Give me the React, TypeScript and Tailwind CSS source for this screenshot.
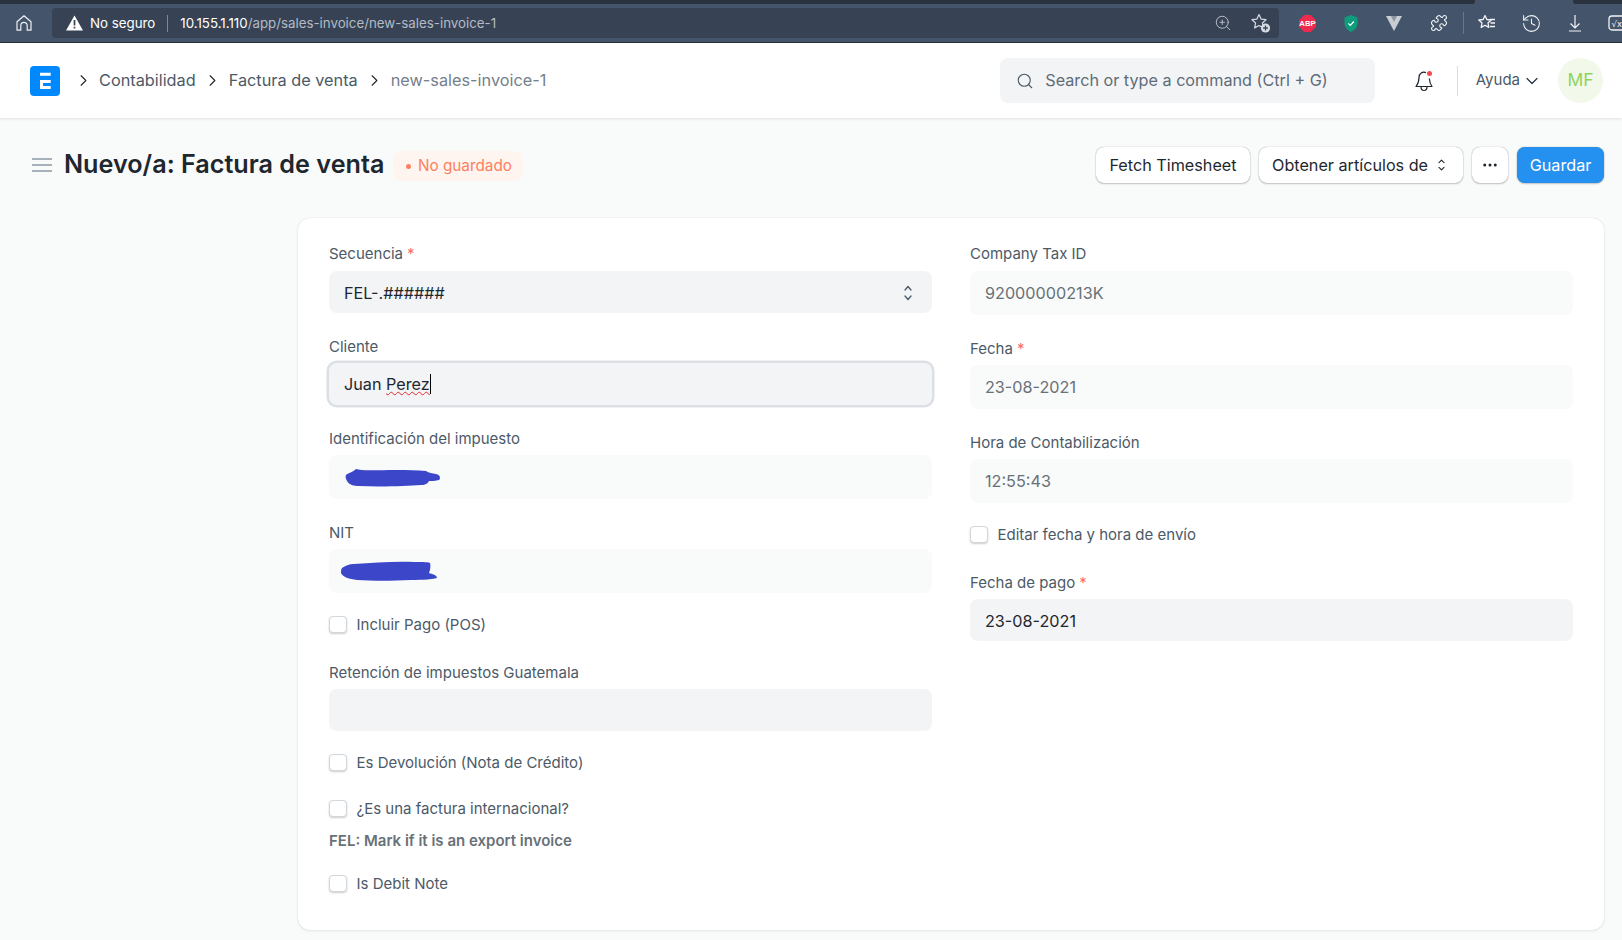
import React from "react";
import { ChevronDown, ChevronRight, History, Puzzle, Search, ZoomIn, MoreHorizontal } from "lucide-react";

const sans = "[font-family:Inter,'Noto_Sans',sans-serif]";

function Req() {
  return <span className="ml-[4px] text-[#f56b6b]">*</span>;
}

function Label({ children, req }: { children: React.ReactNode; req?: boolean }) {
  return (
    <div className="h-[18px] pt-[1px] text-[15px] leading-[18px] text-[#4c5a67]">
      {children}
      {req && <Req />}
    </div>
  );
}

function Check({ label, className }: { label: string; className: string }) {
  return (
    <div className={`flex h-[18px] items-center ${className}`}>
      <span className="h-[17px] w-[18px] rounded-[4px] border border-[#d1d8dd] bg-white shadow-[0_1px_2px_rgba(0,0,0,0.2)]" />
      <span className="ml-[9.500px] pt-[1px] text-[15px] leading-[18px] text-[#4c5a67]">{label}</span>
    </div>
  );
}

function UpDown({ w, h, color }: { w: number; h: number; color: string }) {
  return (
    <svg width={w} height={h} viewBox="0 0 8 16" preserveAspectRatio="none" fill="none" stroke={color} strokeWidth="1.300" strokeLinecap="round" strokeLinejoin="round">
      <path d="M1 5l3-3.500L7 5M1 11l3 3.500 3-3.500" />
    </svg>
  );
}

function HomeIcon() {
  return (
    <svg width="16" height="16" viewBox="0 0 16 16" fill="none" stroke="#eef1f4" strokeWidth="1.200" strokeLinejoin="round">
      <path d="M1 6.800L8 .8l7 6V15.200h-3.800V10.500a3.200 3.200 0 0 0-6.400 0V15.200H1z" />
    </svg>
  );
}

function StarPlus() {
  return (
    <svg width="22" height="22" viewBox="0 0 22 22" fill="none" stroke="#d5dbe3" strokeWidth="1.200">
      <path d="M9 2.500l2.100 4.600 4.900.6-3.600 3.300 1 4.900L9 13.500l-4.400 2.400 1-4.900L2 7.700l4.900-.6z" strokeLinejoin="round" />
      <circle cx="15.500" cy="16" r="4.600" fill="#d5dbe3" stroke="none" />
      <path d="M15.500 13.600v4.800M13.100 16h4.800" stroke="#3b4859" strokeWidth="1.300" />
    </svg>
  );
}

function StarList() {
  return (
    <svg width="20" height="20" viewBox="0 0 20 20" fill="none" stroke="#f2f4f7" strokeWidth="1.300" strokeLinejoin="round">
      <path d="M8 2.500l1.900 4 4.300.5-3.200 3 .8 4.400L8 12.300l-3.800 2.100.8-4.400-3.200-3 4.300-.5z" />
      <path d="M13 6.500h5M13.500 10h4.500M13 13.500h5" />
    </svg>
  );
}

function DownloadIcon() {
  return (
    <svg width="14" height="18" viewBox="0 0 14 18" fill="none" stroke="#f2f4f7" strokeWidth="1.200">
      <path d="M7 1v12.500M2.500 9.500L7 14l4.500-4.500M1 17h12" />
    </svg>
  );
}

function Abp() {
  return (
    <svg width="17" height="17" viewBox="0 0 18 18">
      <path d="M5.500 0h7L18 5.500v7L12.500 18h-7L0 12.500v-7z" fill="#ee2a4f" />
      <text x="9" y="11.800" textAnchor="middle" fontSize="8.200" fontWeight="700" fill="#fff" fontFamily="Liberation Sans, sans-serif">ABP</text>
    </svg>
  );
}

function Shield() {
  return (
    <svg width="14" height="17" viewBox="0 0 14 17">
      <path d="M7 0l6.500 2.500v6c0 4-3 6.800-6.500 8.500C3.500 15.300.5 12.500.5 8.500v-6z" fill="#0f9c7d" />
      <path d="M4.300 8.300l2 2 3.500-3.800" fill="none" stroke="#fff" strokeWidth="1.200" />
    </svg>
  );
}

function Vee() {
  return (
    <svg width="16" height="15" viewBox="0 0 16 15">
      <path d="M0 0h16L8 15z" fill="#c9ced5" />
      <path d="M5 0h6L8 6z" fill="#8c95a2" />
    </svg>
  );
}

function LogoE() {
  return (
    <svg width="30" height="30" viewBox="0 0 30 30" className="shrink-0">
      <rect width="30" height="30" rx="4" fill="#0089ff" />
      <path d="M10 6.800h10.700v3H10zM10 14h10.700v3H13v3h7.700v3H10z" fill="#fff" />
    </svg>
  );
}

function Hamburger() {
  return (
    <svg width="20" height="16" viewBox="0 0 20 16" fill="none" stroke="#a6b1b9" strokeWidth="2">
      <path d="M0 2h20M0 8h20M0 14h20" />
    </svg>
  );
}

function BellDot() {
  return (
    <div className="relative h-[22px] w-[18px]">
      <svg width="18" height="22" viewBox="0 0 18 22" fill="none" stroke="#1f272e" strokeWidth="1.200" strokeLinejoin="round">
        <path d="M11 2.600C7.500 1.200 4 3.400 4 7.500c0 4-1 6.500-3 9h16c-1.500-2-2.400-4.500-2.700-8" />
        <path d="M6 16.800c0 2.500 1.500 3.700 3 3.700s3-1.200 3-3.700" />
      </svg>
      <span className="absolute right-[1px] top-[1px] h-[5px] w-[5px] rounded-full bg-[#f5484d]" />
    </div>
  );
}

function Blob1() {
  return (
    <svg width="96" height="18" viewBox="0 0 96 18" fill="#3c46c8">
      <path d="M1 6C3 4 8 3 11 0c5 2 20 1 40 1 12 0 22 0 30 1 3 2 6 2 10 3 4 1 5 4 3 6-3 1-8 1-10 1-1 2-3 4-8 4-14 1-40 2-62 1-5 0-10-1-12-5C1 10 0 8 1 6z" />
    </svg>
  );
}

function Blob2() {
  return (
    <svg width="97" height="20" viewBox="0 0 97 20" fill="#3c46c8">
      <path d="M1 7c3-2 7-4 12-4 20-1 40-3 60-2 10 0 15 0 16 1 1 3 0 8-1 10 3 1 8 2 8 5-2 1-14 2-26 2-20 1-38 1-54 0-8-1-14-3-16-7C0 10 0 8 1 7z" />
    </svg>
  );
}

function Btn({ children, className = "" }: { children: React.ReactNode; className?: string }) {
  return (
    <div className={`flex h-[36px] items-center rounded-[8px] bg-white text-[16.200px] text-[#1f272e] shadow-[0_0_1px_rgba(0,0,0,0.45),0_1px_2px_rgba(0,0,0,0.2)] ${className}`}>
      {children}
    </div>
  );
}

export default function App() {
  return (
    <div className={`flex h-[940px] w-[1622px] flex-col overflow-hidden bg-[#f9fafa] ${sans}`}>
      {/* browser chrome */}
      <div className="relative h-[43px] shrink-0 border-b border-[#252d38] bg-[#44546a] pt-[8px]">
        <div className="absolute left-0 right-0 top-0 flex h-[4px] justify-between">
          <div className="w-[1475px] rounded-br-[3px] bg-[#2a323e]" />
          <div className="w-[49px] rounded-bl-[3px] bg-[#2a323e]" />
        </div>
        <div className="flex h-[30px] items-center">
          <div className="flex w-[52px] shrink-0 justify-center pr-[4px]">
            <HomeIcon />
          </div>
          <div className="flex h-[30px] w-[1227px] shrink-0 items-center rounded-[4px] bg-[#374354] pl-[14px] pr-[7px]">
            <svg width="17" height="16" viewBox="0 0 17 16">
              <path d="M8.500 0.500L17 15.500H0z" fill="#fff" />
              <path d="M8.500 5v5.500M8.500 11.800v1.600" stroke="#374354" strokeWidth="1.700" />
            </svg>
            <span className="ml-[7px] pt-[1px] text-[13.300px] text-white">No seguro</span>
            <span className="ml-[12px] h-[17px] w-px bg-[#7d8896]" />
            <span className="ml-[12px] pt-[1px] text-[13.300px] text-white">10.155.1.110</span>
            <span className="pt-[1px] text-[13.300px] text-[#b3bbc6]">/app/sales-invoice/new-sales-invoice-1</span>
            <div className="ml-auto flex items-center gap-[18px]">
              <ZoomIn className="h-[18px] w-[18px] text-[#c3cad3]" strokeWidth={1.200} />
              <StarPlus />
            </div>
          </div>
          <div className="ml-[19px] flex items-center">
            <div className="flex w-[18px] justify-center"><Abp /></div>
            <div className="ml-[28px] flex w-[14px] justify-center"><Shield /></div>
            <div className="ml-[28px] flex w-[16px] justify-center"><Vee /></div>
            <Puzzle className="ml-[28px] h-[18px] w-[18px] text-[#f2f4f7]" strokeWidth={1.500} />
            <span className="ml-[15px] h-[22px] w-px bg-[#6a7789]" />
            <div className="ml-[13px]"><StarList /></div>
            <History className="ml-[24px] h-[21px] w-[21px] text-[#f2f4f7]" strokeWidth={1.200} />
            <div className="ml-[26px]"><DownloadIcon /></div>
            <svg className="ml-[26px] shrink-0" width="20" height="20" viewBox="0 0 20 20" fill="none" stroke="#f2f4f7" strokeWidth="1.300">
              <rect x="1" y="3" width="18" height="14" rx="3" />
              <text x="3.500" y="13.500" fontSize="8.500" fill="#f2f4f7" stroke="none" fontFamily="DejaVu Sans, sans-serif">√x</text>
            </svg>
          </div>
        </div>
      </div>

      {/* app nav */}
      <div className="flex h-[75px] shrink-0 items-center bg-white pl-[30px] pr-[19px] shadow-[0_1px_3px_rgba(0,0,0,0.1)]">
        <LogoE />
        <ChevronRight className="ml-[13.500px] h-[19px] w-[19px] text-[#1f272e]" strokeWidth={1.400} />
        <span className="ml-[6.500px] text-[16.300px] text-[#4c5a67]">Contabilidad</span>
        <ChevronRight className="ml-[7px] h-[19px] w-[19px] text-[#1f272e]" strokeWidth={1.400} />
        <span className="ml-[7px] text-[16.300px] text-[#4c5a67]">Factura de venta</span>
        <ChevronRight className="ml-[7px] h-[19px] w-[19px] text-[#1f272e]" strokeWidth={1.400} />
        <span className="ml-[7px] text-[16.300px] text-[#74808b]">new-sales-invoice-1</span>
        <div className="ml-auto flex h-[45px] w-[375px] items-center rounded-[8px] bg-[#f3f4f6] pl-[16px]">
          <Search className="h-[18px] w-[18px] text-[#4c5a67]" strokeWidth={1.500} />
          <span className="ml-[11px] text-[16.200px] text-[#5e6c78]">Search or type a command (Ctrl + G)</span>
        </div>
        <div className="ml-[40px]"><BellDot /></div>
        <span className="ml-[24px] h-[30px] w-px bg-[#d8dde1]" />
        <span className="ml-[17.500px] text-[15px] text-[#4c5a67]">Ayuda</span>
        <ChevronDown className="ml-[2px] h-[20px] w-[20px] text-[#2f3942]" strokeWidth={1.500} />
        <div className="ml-[16px] flex h-[45px] w-[45px] shrink-0 items-center justify-center rounded-full bg-[#f2f9ea] text-[17.500px] text-[#8fd35f]">MF</div>
      </div>

      {/* page head */}
      <div className="flex h-[100px] shrink-0 items-center pl-[32px] pr-[18px] pb-[6px]">
        <Hamburger />
        <h1 className="ml-[12px] text-[25.200px] font-semibold text-[#1f272e]">Nuevo/a: Factura de venta</h1>
        <div className="ml-[9px] mt-[2px] flex h-[30px] w-[130px] items-center rounded-[8px] bg-[#fff5f0] pl-[13px] text-[15.300px] text-[#fd8060]">
          <span className="mr-[6.500px] h-[5px] w-[5px] rounded-full bg-[#fd8060]" />
          No guardado
        </div>
        <div className="ml-auto flex items-center gap-[9px]">
          <Btn className="w-[154px] justify-center">Fetch Timesheet</Btn>
          <Btn className="w-[204px] pl-[13px]">
            Obtener artículos de
            <span className="ml-[10px]"><UpDown w={7} h={12} color="#1f272e" /></span>
          </Btn>
          <Btn className="w-[36px] justify-center"><MoreHorizontal className="h-[18px] w-[18px]" strokeWidth={2} /></Btn>
          <Btn className="w-[87px] justify-center !bg-[#2490ef] !text-white">Guardar</Btn>
        </div>
      </div>

      {/* form card */}
      <div className="ml-[298px] grid h-[712px] w-[1306px] shrink-0 grid-cols-[603px_603px] gap-x-[38px] rounded-[12px] bg-white pl-[31px] pt-[26px] text-[16.200px] shadow-[0_0_1px_rgba(0,0,0,0.2),0_1px_3px_rgba(0,0,0,0.08)]">
        <div>
          <Label req>Secuencia</Label>
          <div className="mt-[9px] flex h-[42px] items-center justify-between rounded-[8px] bg-[#f3f4f6] pl-[15px] pr-[20px] pt-[2px] text-[#1f272e]">
            FEL-.######
            <UpDown w={8} h={16} color="#4c5a67" />
          </div>

          <div className="mt-[24px]"><Label>Cliente</Label></div>
          <div className="mt-[8px] flex h-[42px] items-center rounded-[8px] bg-[#f3f4f6] pl-[15px] text-[#1f272e] shadow-[0_0_0_2.500px_#dcdfe3]">
            Juan&nbsp;
            <span className="underline decoration-[#e02b2b] decoration-wavy decoration-[1px] underline-offset-[1px]">Perez</span>
            <span className="h-[20px] w-px bg-black" />
          </div>

          <div className="mt-[24px]"><Label>Identificación del impuesto</Label></div>
          <div className="mt-[8px] flex h-[44px] items-center rounded-[8px] bg-[#f9fafa] pl-[16px] pt-[2px]"><Blob1 /></div>

          <div className="mt-[24px]"><Label>NIT</Label></div>
          <div className="mt-[8px] flex h-[44px] items-center rounded-[8px] bg-[#f9fafa] pl-[12px]"><Blob2 /></div>

          <Check className="mt-[22px]" label="Incluir Pago (POS)" />

          <div className="mt-[30px]"><Label>Retención de impuestos Guatemala</Label></div>
          <div className="mt-[8px] h-[42px] rounded-[8px] bg-[#f3f4f6]" />

          <Check className="mt-[22px]" label="Es Devolución (Nota de Crédito)" />
          <Check className="mt-[28px]" label="¿Es una factura internacional?" />
          <div className="mt-[14px] h-[18px] pt-[1px] text-[15px] font-semibold leading-[18px] text-[#687178]">FEL: Mark if it is an export invoice</div>
          <Check className="mt-[25px]" label="Is Debit Note" />
        </div>

        <div>
          <Label>Company Tax ID</Label>
          <div className="mt-[9px] flex h-[44px] items-center rounded-[8px] bg-[#f9fafa] pl-[15px] text-[#687178]">92000000213K</div>

          <div className="mt-[24px]"><Label req>Fecha</Label></div>
          <div className="mt-[8px] flex h-[44px] items-center rounded-[8px] bg-[#f9fafa] pl-[15px] text-[#687178]">23-08-2021</div>

          <div className="mt-[24px]"><Label>Hora de Contabilización</Label></div>
          <div className="mt-[8px] flex h-[44px] items-center rounded-[8px] bg-[#f9fafa] pl-[15px] text-[#687178]">12:55:43</div>

          <Check className="mt-[22px]" label="Editar fecha y hora de envío" />

          <div className="mt-[30px]"><Label req>Fecha de pago</Label></div>
          <div className="mt-[8px] flex h-[42px] items-center rounded-[8px] bg-[#f3f4f6] pl-[15px] pt-[2px] text-[#1f272e]">23-08-2021</div>
        </div>
      </div>
    </div>
  );
}
